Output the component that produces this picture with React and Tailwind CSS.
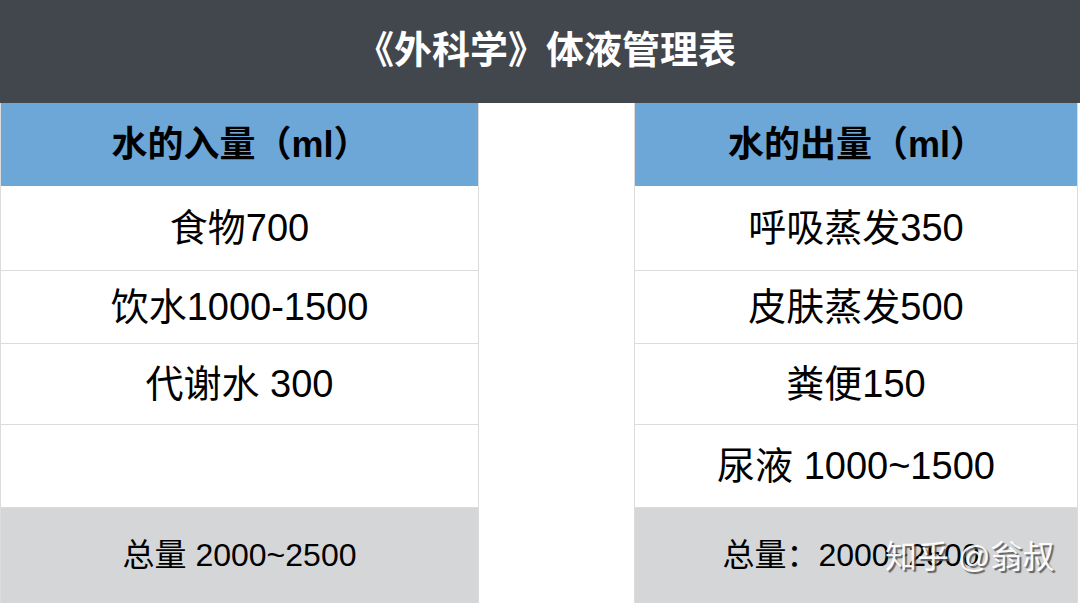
import React from "react";

const FONT = { fontFamily: "'Liberation Sans', 'Noto Sans CJK SC', sans-serif" };

export default function App() {
  const left = ["食物700", "饮水1000-1500", "代谢水 300", ""];
  const right = ["呼吸蒸发350", "皮肤蒸发500", "粪便150", "尿液 1000~1500"];
  const rowH = ["h-[85px]", "h-[73px]", "h-[81px]", "h-[83px]"];
  return (
    <div className="w-[1080px] h-[603px] bg-white overflow-hidden flex flex-col" style={FONT}>
      <div className="h-[103px] bg-[#42464d] flex items-center justify-center pl-[12px] pb-[2px]">
        <span className="text-white font-bold text-[38px]">《外科学》体液管理表</span>
      </div>
      <div className="flex flex-1">
        <div className="w-[479px] flex flex-col border-l border-r border-[#dcdcdc]">
          <div className="h-[83px] bg-[#6ca7d7] flex items-center justify-center text-[36px] font-bold text-black pl-[2px]">
            水的入量（ml）
          </div>
          {left.map((t, i) => (
            <div key={i} className={`${rowH[i]} flex items-center justify-center text-[38px] text-black border-b border-[#dcdcdc]`}>
              {t}
            </div>
          ))}
          <div className="flex-1 bg-[#d5d6d8] flex items-center justify-center text-[32px] text-black pb-[2px]">
            总量 2000~2500
          </div>
        </div>
        <div className="w-[155px]" />
        <div className="flex-1 mr-[2px] flex flex-col border-l border-r border-[#dcdcdc]">
          <div className="h-[83px] bg-[#6ca7d7] flex items-center justify-center text-[36px] font-bold text-black pl-[2px]">
            水的出量（ml）
          </div>
          {right.map((t, i) => (
            <div key={i} className={`${rowH[i]} flex items-center justify-center text-[38px] text-black border-b border-[#dcdcdc]`}>
              {t}
            </div>
          ))}
          <div className="relative flex-1 bg-[#d5d6d8] flex items-center justify-center text-[32px] text-black pb-[2px] pr-[10px]">
            总量：2000~2500
            <span
              className="absolute left-[250px] top-[25px] text-[32px] text-white/95 whitespace-nowrap"
              style={{ textShadow: "2px 2px 1px rgba(80,80,80,0.85)" }}
            >
              知乎 @翁叔
            </span>
          </div>
        </div>
      </div>
    </div>
  );
}
